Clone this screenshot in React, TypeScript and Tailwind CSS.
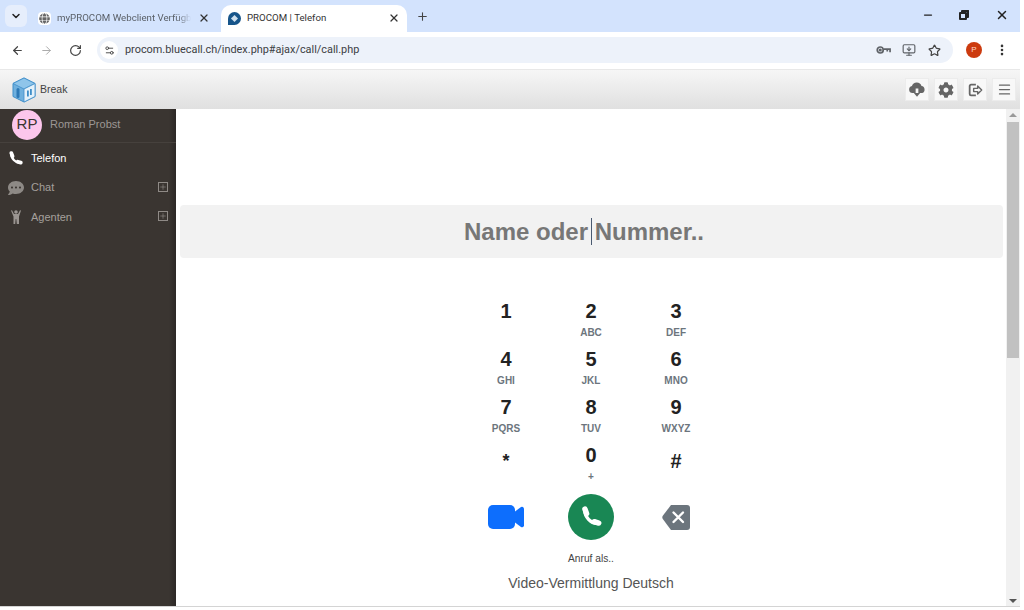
import { ArrowLeft, ArrowRight, ChevronDown, EllipsisVertical, Menu, Minus, MonitorDown, Plus, RotateCw, Settings2, Star, X } from 'lucide-react'
import { FaCog, FaCommentDots, FaGlobe } from 'react-icons/fa'

const keys = [
  ['1', ''],
  ['2', 'ABC'],
  ['3', 'DEF'],
  ['4', 'GHI'],
  ['5', 'JKL'],
  ['6', 'MNO'],
  ['7', 'PQRS'],
  ['8', 'TUV'],
  ['9', 'WXYZ'],
]

const CubeLogo = () => (
  <svg viewBox="0 0 24 26" className="h-[26px] w-[24px]">
    <path d="M12 1 23 6.500 23 19.500 12 25 1 19.500 1 6.500Z" fill="#6fb0de" stroke="#3f8ec9" strokeWidth="1" />
    <path d="M12 1 23 6.500 12 12 1 6.500Z" fill="#8fc5ea" stroke="#3f8ec9" strokeWidth="0.8" />
    <path d="M12 12V25L23 19.500V6.500Z" fill="#e4f1fa" stroke="#3f8ec9" strokeWidth="0.8" />
    <rect x="4.500" y="11" width="3" height="10" rx="1.500" fill="#2c78b5" />
    <rect x="15" y="13.500" width="1.800" height="6" fill="#3f8ec9" />
    <rect x="18" y="12" width="1.800" height="6" fill="#3f8ec9" />
  </svg>
)

const KeyIcon = () => (
  <svg viewBox="0 0 16 10" className="h-[10px] w-[15px]" fill="none" stroke="#5f6368" strokeWidth="1.800">
    <circle cx="4.500" cy="5" r="3.200" />
    <circle cx="4.500" cy="5" r="0.800" fill="#5f6368" />
    <path d="M8 4h7v3.500M12 4v2.500" />
  </svg>
)

const PhoneGlyph = ({ size }: { size: number }) => (
  <svg viewBox="0 0 20 20" width={size} height={size} fill="none" stroke="currentColor" strokeLinecap="round">
    <path d="M4.500 3C3.500 9 10 17 17 15.500" strokeWidth="3" />
    <path d="M4.500 2.800 6 7" strokeWidth="5" />
    <path d="M13 14.300 17 15.500" strokeWidth="5" />
  </svg>
)

const AgentGlyph = () => (
  <svg viewBox="0 0 12 14" className="h-[14px] w-[12px]" fill="#9a9591">
    <circle cx="6" cy="2" r="1.800" />
    <path d="M1 0.500 2 0.200 4 4h4l2-3.800 1 .3-2 6V14H6.800L6.300 9h-.6l-.5 5H3.500V6.500Z" />
  </svg>
)

const VideoGlyph = () => (
  <svg viewBox="0 0 36 24" className="h-[24px] w-[36px]" fill="#0d6efd">
    <rect x="0" y="0" width="27" height="24" rx="5" />
    <path d="M25 8 33 2a2 2 0 0 1 3 1.500v17a2 2 0 0 1-3 1.500L25 16Z" />
  </svg>
)

const BackspaceGlyph = () => (
  <svg viewBox="0 0 28 25" className="h-[25px] w-[28px]">
    <path d="M9 0H25a3 3 0 0 1 3 3V22a3 3 0 0 1-3 3H9L.8 14a3 3 0 0 1 0-3.200Z" fill="#6c757d" />
    <path d="M11.500 7.500 21 17M21 7.500 11.500 17" stroke="#fff" strokeWidth="2.400" strokeLinecap="round" />
  </svg>
)

const LogoutGlyph = () => (
  <svg viewBox="0 0 18 18" className="h-[16px] w-[16px]" fill="none" stroke="#666" strokeWidth="2">
    <path d="M10 3H4.500A1.500 1.500 0 0 0 3 4.500v9A1.500 1.500 0 0 0 4.500 15H10" />
    <path d="M7.500 7.200H12V4.500L16.500 9 12 13.500V10.800H7.500Z" strokeWidth="1.600" strokeLinejoin="round" />
  </svg>
)

const CloudDown = () => (
  <svg viewBox="0 0 20 18" className="h-[17px] w-[18px]" fill="#666">
    <path d="M5 13a4 4 0 0 1-.6-7.900A5.500 5.500 0 0 1 15 5.200 4 4 0 0 1 15.500 13H11.500V8h-3v5Z" />
    <path d="M6.500 13h7L10 17Z" />
  </svg>
)

const PlusBox = () => (
  <span className="flex h-[10px] w-[10px] items-center justify-center border border-[#8f8a86] text-[#a5a09c]">
    <Plus size={8} strokeWidth={1.500} />
  </span>
)

const HeadButton = ({ children }: { children: React.ReactNode }) => (
  <button className="flex h-[23px] w-[24px] items-center justify-center border border-[#ececec] bg-[#f8f8f8] text-[#666]">
    {children}
  </button>
)

export default function App() {
  return (
    <div className="h-[610px] w-[1024px] overflow-hidden bg-white font-['Liberation_Sans',Arial,sans-serif]">
      <div className="flex h-[607px] w-[1020px] flex-col">
        {/* tab strip */}
        <div className="flex h-[32px] shrink-0 items-end bg-[#d3e3fd] pl-[5px] font-['Roboto',sans-serif] text-[9.700px] text-[#444]">
          <button className="mb-[5px] flex h-[22px] w-[22px] items-center justify-center rounded-md bg-[#e6eefc] text-[#222]">
            <ChevronDown size={12} strokeWidth={3} />
          </button>
          <div className="ml-[4px] flex h-[27px] w-[184px] items-center pb-[1px] pl-[7px] text-[#5a6068]">
            <span className="flex h-[13px] w-[13px] items-center justify-center rounded-sm bg-white">
              <FaGlobe size={11} className="text-[#666]" />
            </span>
            <span className="ml-[6px] w-[134px] whitespace-nowrap [mask-image:linear-gradient(to_right,black_90%,transparent)]">myPROCOM Webclient Verfügb</span>
            <X size={12} strokeWidth={2.500} className="ml-[7px] text-[#333]" />
          </div>
          <div className="ml-[6px] flex h-[27px] w-[186px] items-center rounded-t-[10px] bg-white pb-[1px] pl-[7px] text-[#333]">
            <span className="flex h-[13px] w-[13px] items-center justify-center rounded-full rounded-bl-none bg-[#17558a]">
              <span className="h-[5px] w-[5px] rotate-45 bg-[#cfe0ee]" />
            </span>
            <span className="ml-[6px] w-[134px] whitespace-nowrap">PROCOM | Telefon</span>
            <X size={12} strokeWidth={2.500} className="ml-[7px] text-[#333]" />
          </div>
          <Plus size={13} strokeWidth={2} className="mb-[9px] ml-[9px] text-[#444]" />
          <div className="ml-auto flex items-center pb-[10px] pr-[11px] text-[#222]">
            <Minus size={12} strokeWidth={2.500} className="mr-[25px]" />
            <span className="relative mr-[26px] h-[10px] w-[10px]">
              <span className="absolute bottom-0 left-0 h-[8px] w-[8px] rounded-[1px] border-2 border-[#222]" />
              <span className="absolute right-0 top-0 h-[8px] w-[8px] rounded-[1px] border-t-2 border-r-2 border-[#222]" />
            </span>
            <X size={14} strokeWidth={2.500} />
          </div>
        </div>

        {/* browser toolbar */}
        <div className="flex h-[37px] shrink-0 items-center rounded-t-lg bg-white pb-[1px] pl-[11px] text-[#444]">
          <ArrowLeft size={13} strokeWidth={2.200} />
          <ArrowRight size={13} strokeWidth={1.800} className="ml-[16px] text-[#aaa]" />
          <RotateCw size={13} strokeWidth={2.200} className="ml-[16px]" />
          <div className="ml-[15px] flex h-[26px] w-[856px] items-center rounded-full bg-[#edf2fa] pl-[3px]">
            <span className="flex h-[18px] w-[18px] items-center justify-center rounded-full bg-white text-[#444]">
              <Settings2 size={11} strokeWidth={2} />
            </span>
            <span className="ml-[7px] font-['Roboto',sans-serif] text-[10.900px] text-[#3c4043]">procom.bluecall.ch/index.php#ajax/call/call.php</span>
            <div className="ml-auto flex items-center pr-[12px] text-[#5f6368]">
              <KeyIcon />
              <MonitorDown size={14} strokeWidth={2} className="ml-[11px]" />
              <Star size={13} strokeWidth={2.200} className="ml-[12px] text-[#444]" />
            </div>
          </div>
          <span className="ml-[13px] flex h-[16px] w-[16px] items-center justify-center rounded-full bg-[#cc3b0f] text-[8px] text-[#ffd9c9]">P</span>
          <EllipsisVertical size={14} strokeWidth={2.500} className="ml-[13px] text-[#333]" />
        </div>

        {/* app header */}
        <div className="flex h-[40px] shrink-0 items-center border-t border-[#e8e8e8] bg-gradient-to-b from-[#f6f6f6] to-[#e0e0e0] pl-[12px] pr-[4px]">
          <CubeLogo />
          <span className="ml-[4px] text-[10.500px] text-[#444]">Break</span>
          <div className="ml-auto flex gap-[5px]">
            <HeadButton>
              <CloudDown />
            </HeadButton>
            <HeadButton>
              <FaCog size={16} />
            </HeadButton>
            <HeadButton>
              <LogoutGlyph />
            </HeadButton>
            <HeadButton>
              <Menu size={15} strokeWidth={2} />
            </HeadButton>
          </div>
        </div>

        <div className="flex min-h-0 flex-1 border-b border-[#d4d4d4]">
          {/* sidebar */}
          <aside className="flex w-[176px] flex-col bg-gradient-to-r from-[#3a3531] from-[96%] to-[#2c2826] text-[11px] text-[#a5a09c]">
            <div className="flex h-[34px] items-center border-b border-[#46413d] pb-[2px] pl-[12px]">
              <span className="flex h-[30px] w-[30px] items-center justify-center rounded-full bg-[#fcc6ec] text-[15px] text-[#3a3531]">RP</span>
              <span className="ml-[8px] text-[#9c9794]">Roman Probst</span>
            </div>
            <div className="flex h-[30px] items-center pl-[8px] text-white">
              <PhoneGlyph size={15} />
              <span className="ml-[8px]">Telefon</span>
            </div>
            <div className="flex h-[29px] items-center pl-[8px] pr-[8px]">
              <FaCommentDots size={16} className="text-[#8d8985]" />
              <span className="ml-[7px]">Chat</span>
              <span className="mb-[2px] ml-auto"><PlusBox /></span>
            </div>
            <div className="flex h-[30px] items-center pl-[10px] pr-[8px]">
              <AgentGlyph />
              <span className="ml-[9px]">Agenten</span>
              <span className="mb-[2px] ml-auto"><PlusBox /></span>
            </div>
          </aside>

          {/* main column */}
          <main className="flex flex-1 flex-col items-center pt-[96px]">
            <div className="relative flex h-[53px] w-[823px] items-center justify-center rounded-sm bg-[#f2f2f2] pr-[14px] text-[24px] font-bold text-[#777]">
              Name oder Nummer..
              <span className="absolute left-[411px] top-[13px] h-[27px] w-px bg-[#4a5a70]" />
            </div>

            <div className="mt-[39px] grid w-[255px] grid-cols-3 text-center">
              {keys.map(([digit, letters]) => (
                <div key={digit} className="flex h-[48px] flex-col items-center">
                  <span className="text-[20px] leading-[28px] font-bold text-[#222]">{digit}</span>
                  <span className="mt-[1px] text-[10px] leading-[14px] font-bold text-[#6c757d]">{letters}</span>
                </div>
              ))}
              <div className="flex h-[48px] justify-center pt-[6px] text-[18px] leading-[28px] font-bold text-[#222]">*</div>
              <div className="flex h-[48px] flex-col items-center">
                <span className="text-[20px] leading-[28px] font-bold text-[#222]">0</span>
                <span className="mt-[1px] text-[10px] leading-[14px] font-bold text-[#6c757d]">+</span>
              </div>
              <div className="flex h-[48px] justify-center pt-[6px] text-[20px] leading-[28px] font-bold text-[#222]">#</div>
            </div>

            <div className="mt-[5px] grid w-[255px] grid-cols-3 items-center justify-items-center">
              <VideoGlyph />
              <span className="flex h-[46px] w-[46px] items-center justify-center rounded-full bg-[#198754] text-white">
                <PhoneGlyph size={22} />
              </span>
              <BackspaceGlyph />
            </div>

            <p className="mt-[11px] text-[10.200px] text-[#444]">Anruf als..</p>
            <p className="mt-[7px] text-[14px] text-[#555]">Video-Vermittlung Deutsch</p>
          </main>

          {/* scrollbar */}
          <div className="flex w-[14px] flex-col items-center bg-[#f1f1f1] pt-[4px]">
            <span className="h-0 w-0 border-x-[4px] border-b-[4px] border-x-transparent border-b-[#999]" />
            <span className="mt-[5px] h-[236px] w-[12px] bg-[#c1c1c1]" />
            <span className="mb-[3px] mt-auto h-0 w-0 border-x-[4px] border-t-[4px] border-x-transparent border-t-[#555]" />
          </div>
        </div>
      </div>
    </div>
  )
}
